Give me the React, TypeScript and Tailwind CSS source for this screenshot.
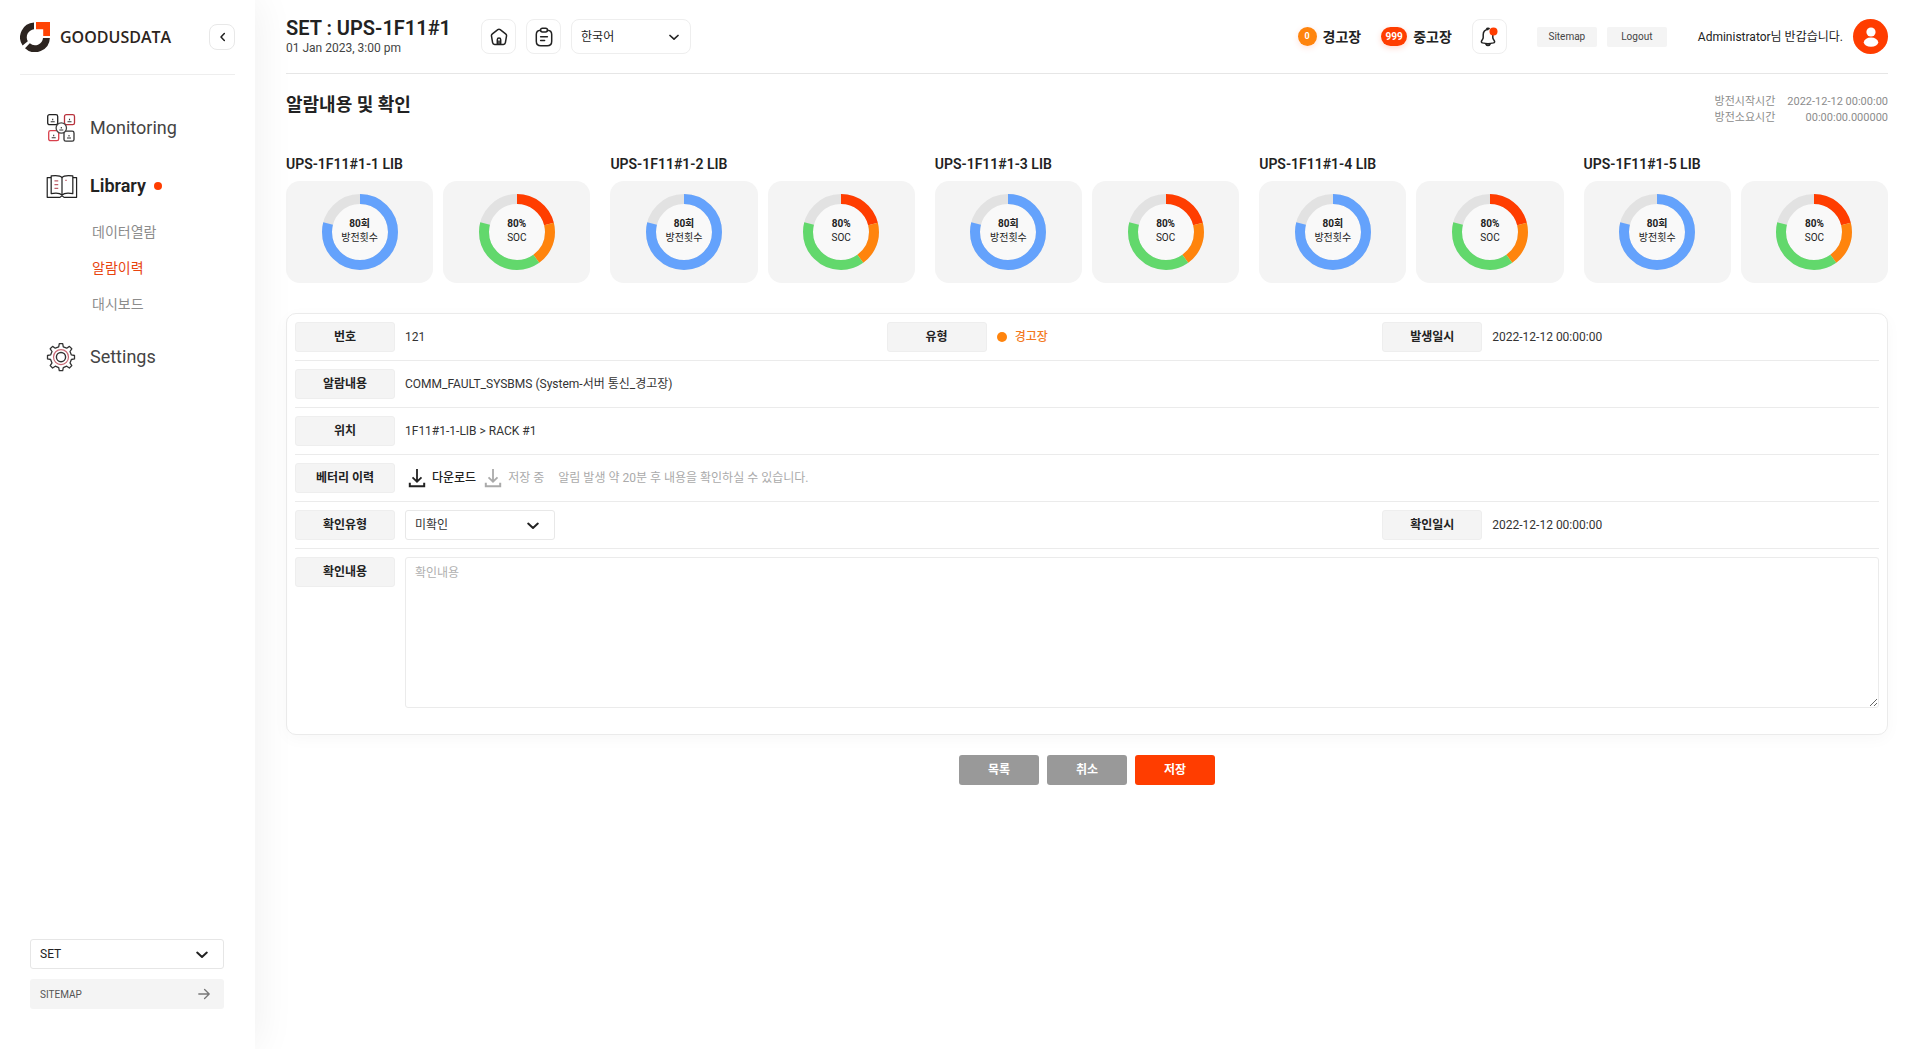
import React, { useState } from "react";
import type { ReactNode } from "react";

const FONT = "font-['Roboto','Noto_Sans_CJK_KR',sans-serif]";

function Chevron({ className }: { className: string }) {
  return (
    <svg viewBox="0 0 12 8" fill="none" stroke="#222" strokeWidth="2" strokeLinecap="round" strokeLinejoin="round" className={className} aria-hidden="true">
      <path d="M1.2 1.6 6 6l4.800-4.400" />
    </svg>
  );
}

function Logo() {
  return (
    <svg viewBox="0 0 30 30" className="size-[30px]" aria-hidden="true">
      <path d="M14 0.600A14.700 14.700 0 0 0 2.600 23.500L7.800 19.200A8 8 0 0 1 14 7.300Z" fill="#2c2420" />
      <path d="M29.900 16A14.800 14.800 0 0 1 5 26.200L9.800 21.300A8 8 0 0 0 23 16Z" fill="#2c2420" />
      <path d="M16 0H30V14H23.200V7.300H16Z" fill="#ff4405" />
    </svg>
  );
}

function MonitoringIcon() {
  const cell = (x: number, y: number) => (
    <path d={`M${x - 2} ${y + 2}h4M${x} ${y - 1}v1.600`} stroke="#333" strokeWidth="1.100" />
  );
  return (
    <svg viewBox="0 0 30 30" fill="none" strokeWidth="1.300" className="size-[30px]" aria-hidden="true">
      <rect x="1.700" y="1.700" width="10" height="10" rx="1.800" stroke="#222" />
      <rect x="18.500" y="1.700" width="10" height="10" rx="1.800" stroke="#b8323c" />
      <rect x="2.700" y="17.700" width="10" height="10" rx="1.800" stroke="#d8404c" />
      <rect x="18" y="18.200" width="10" height="10" rx="1.800" stroke="#333" />
      <circle cx="15.300" cy="15" r="5.200" stroke="#444" fill="#fff" />
      {cell(6.700, 6.700)}
      {cell(23.500, 6.700)}
      {cell(7.700, 22.700)}
      {cell(23, 23)}
      {cell(15.300, 15)}
    </svg>
  );
}

function BookIcon() {
  return (
    <svg viewBox="0 0 34 26" fill="none" stroke="#222" strokeWidth="1.300" strokeLinejoin="round" className="h-[25px] w-8" aria-hidden="true">
      <path d="M5.500 3.500H1.300V24.500H14.500C15.500 24.500 16 23 17 23s1.500 1.500 2.500 1.500H32.500V3.500H28.500" />
      <path d="M17 3.500C15 1 11 1.200 5.500 1.800V20.500C11 19.500 15 20 17 22C19 20 23 19.500 28.500 20.500V1.800C23 1.200 19 1 17 3.500Z" />
      <path d="M17 3.500V22" />
      <path d="M9 7h4M9 11h4M9 15h4M20.500 6.500h1.500" stroke="#c0606a" />
    </svg>
  );
}

function GearIcon() {
  return (
    <svg viewBox="0 0 30 30" fill="none" strokeLinejoin="round" className="size-[30px]" aria-hidden="true">
      <path
        d="M12.700 4.800 13.300 1.700h3.400l.6 3.100 3.400 1.400 2.700-1.800 2.400 2.400-1.800 2.700 1.400 3.400 3.100.6v3.400l-3.100.6-1.400 3.400 1.800 2.700-2.400 2.400-2.700-1.800-3.400 1.400-.6 3.100h-3.400l-.6-3.100-3.400-1.400-2.700 1.800-2.400-2.400 1.800-2.700-1.400-3.400-3.100-.6v-3.400l3.100-.6 1.400-3.400-1.800-2.700 2.400-2.400 2.700 1.800Z"
        stroke="#333"
        strokeWidth="1.300"
      />
      <circle cx="15" cy="15.100" r="7.500" stroke="#c86874" strokeWidth="1.200" />
      <circle cx="15" cy="15.100" r="4.600" stroke="#333" strokeWidth="1.400" />
    </svg>
  );
}

function HomeIcon() {
  return (
    <svg viewBox="0 0 18 18" fill="none" stroke="#222" strokeWidth="1.500" strokeLinejoin="round" className="size-[18px]" aria-hidden="true">
      <path d="M7.800 1.600 2.400 5.800C1.600 6.400 1.300 7.100 1.500 8.100l1.100 6.600c.2 1.100.9 1.700 2 1.700h8.800c1.100 0 1.800-.6 2-1.700l1.100-6.600c.2-1-.1-1.700-.9-2.300L10.200 1.600c-.8-.6-1.600-.6-2.400 0Z" />
      <path d="M7.300 16v-4.300a1.700 1.700 0 0 1 3.400 0V16M9 12.500V16" />
    </svg>
  );
}

function ClipboardIcon() {
  return (
    <svg viewBox="0 0 18 20" fill="none" stroke="#222" strokeWidth="1.500" strokeLinecap="round" strokeLinejoin="round" className="h-5 w-[18px]" aria-hidden="true">
      <path d="M5.500 3.200C2.500 3.300 1.300 4.600 1.300 7.500v6.800c0 3 1.500 4.500 4.500 4.500h6.400c3 0 4.500-1.500 4.500-4.500V7.500c0-2.900-1.200-4.200-4.200-4.300" />
      <rect x="5.500" y="1.200" width="7" height="3.800" rx="1.900" />
      <path d="M5.600 9.800h6.800M5.600 13.400h4" />
    </svg>
  );
}

function BellIcon() {
  return (
    <svg viewBox="0 0 20 20" fill="none" className="size-5" aria-hidden="true">
      <path d="M9 2.500C5.900 2.500 4.200 4.900 4.200 7.700v2.700c0 .8-.3 1.400-.8 2.200l-.8 1.300c-.5.9-.1 1.700.9 2 3.700 1 7.300 1 11 0 1-.3 1.400-1.100.9-2l-.8-1.300c-.5-.8-.8-1.400-.8-2.200V7.700" stroke="#222" strokeWidth="1.500" strokeLinecap="round" />
      <path d="M7 17c.9 1.800 3.100 1.800 4 0" stroke="#222" strokeWidth="1.800" strokeLinecap="round" />
      <path d="M7.500 2.300C8 1 10 1 10.500 2.300" stroke="#222" strokeWidth="1.500" />
      <circle cx="14.500" cy="4.500" r="4" fill="#ff3d00" />
    </svg>
  );
}

function DownloadIcon() {
  return (
    <svg viewBox="0 0 18 20" fill="none" stroke="currentColor" strokeWidth="2" className="h-5 w-[18px] shrink-0" aria-hidden="true">
      <path d="M9 1v12.500M4.500 9.300 9 13.700l4.500-4.400" strokeWidth="1.800" />
      <path d="M1.800 14.800V18.300H16.200V14.800" />
    </svg>
  );
}

type Slice = { color: string; from: number; to: number };

function Donut({ slices, value, label }: { slices: Slice[]; value: string; label: string }) {
  const r = 33;
  const c = 2 * Math.PI * r;
  return (
    <div className="grid h-[102px] flex-1 place-items-center rounded-[14px] bg-[#f4f4f4]">
      <div className="grid place-items-center">
        <svg viewBox="0 0 76 76" className="col-start-1 row-start-1 size-[76px] -rotate-90" aria-hidden="true">
          <circle cx="38" cy="38" r={r} fill="#f9f9f9" stroke="#e2e2e2" strokeWidth="10" />
          {slices.map((s) => (
            <circle
              key={s.color}
              cx="38"
              cy="38"
              r={r}
              fill="none"
              stroke={s.color}
              strokeWidth="10"
              strokeDasharray={`${(s.to - s.from) * c} ${c}`}
              strokeDashoffset={-s.from * c}
            />
          ))}
        </svg>
        <div className="z-10 col-start-1 row-start-1 pb-0.5 text-center text-[10px] leading-[14px]">
          <p className="font-bold">{value}</p>
          <p>{label}</p>
        </div>
      </div>
    </div>
  );
}

const dischargeSlices: Slice[] = [{ color: "#64a2fc", from: 0, to: 0.79 }];
const socSlices: Slice[] = [
  { color: "#ff3d00", from: 0, to: 0.21 },
  { color: "#ff840d", from: 0.21, to: 0.4 },
  { color: "#62d86c", from: 0.4, to: 0.79 },
];

const labelClass =
  "grid h-[30px] w-[100px] shrink-0 place-items-center rounded-[3px] border border-[#eeeeee] bg-[#f4f4f4] text-xs font-bold text-[#222]";

function Field({ label, htmlFor, children }: { label: string; htmlFor?: string; children: ReactNode }) {
  return (
    <div className="flex items-start gap-2.5">
      {htmlFor ? (
        <label htmlFor={htmlFor} className={labelClass}>
          {label}
        </label>
      ) : (
        <span className={labelClass}>{label}</span>
      )}
      <div className="flex min-h-[30px] flex-1 items-center">{children}</div>
    </div>
  );
}

function Row({ children }: { children: ReactNode }) {
  return <div className="grid grid-cols-[592fr_496fr_497fr] border-b border-[#ebebeb] py-2">{children}</div>;
}

function Sidebar() {
  return (
    <aside className="z-10 flex w-[255px] shrink-0 flex-col bg-white shadow-[0_0_40px_rgba(0,0,0,0.07)]">
      <div className="mx-5 flex h-[75px] items-center justify-between border-b border-[#eeeeee]">
        <a href="#home" className="flex items-center gap-2.5">
          <Logo />
          <span className="font-['Open_Sans',sans-serif] text-base font-semibold leading-6 text-[#2c2420]">GOODUSDATA</span>
        </a>
        <button type="button" aria-label="메뉴 접기" className="grid size-[26px] place-items-center rounded-lg border border-[#e8e8e8]">
          <Chevron className="h-[6px] w-[9px] rotate-90" />
        </button>
      </div>
      <nav className="flex flex-col pl-[46px] pt-[38px] text-lg leading-[30px] text-[#444]">
        <a href="#monitoring" className="flex h-[30px] items-center">
          <span className="w-11"><MonitoringIcon /></span>
          Monitoring
        </a>
        <a href="#library" className="mt-7 flex h-[30px] items-center font-semibold text-[#222]">
          <span className="w-11"><BookIcon /></span>
          Library
          <span className="ml-2 size-2 rounded-full bg-[#ff3d00]" />
        </a>
        <div className="flex flex-col gap-4 pb-7 pl-[46px] pt-[21px] text-sm leading-5 text-[#8c8c8c]">
          <a href="#data">데이터열람</a>
          <a href="#alarm" aria-current="page" className="text-[#e8440f]">알람이력</a>
          <a href="#dashboard">대시보드</a>
        </div>
        <a href="#settings" className="flex h-[30px] items-center">
          <span className="w-11"><GearIcon /></span>
          Settings
        </a>
      </nav>
      <div className="mt-auto flex flex-col gap-2.5 pb-10 pl-[30px] pr-[31px]">
        <div className="relative">
          <select aria-label="SET" className="h-[30px] w-full appearance-none rounded-[3px] border border-[#e6e6e6] bg-white px-[9px] text-xs text-[#222]">
            <option>SET</option>
          </select>
          <Chevron className="pointer-events-none absolute right-4 top-3 h-2 w-3" />
        </div>
        <a href="#sitemap" className="flex h-[30px] items-center justify-between rounded-[3px] bg-[#f4f4f4] pl-2.5 pr-3.5 text-[10px] text-[#555]">
          SITEMAP
          <svg viewBox="0 0 12 12" fill="none" stroke="#777" strokeWidth="1.300" strokeLinecap="round" strokeLinejoin="round" className="size-3" aria-hidden="true">
            <path d="M.8 6h10.400M6.600 1.500 11.200 6l-4.600 4.500" />
          </svg>
        </a>
      </div>
    </aside>
  );
}

const headerButton = "grid size-[35px] place-items-center rounded-lg border border-[#eeeeee] bg-white";
const headerPill = "grid h-5 w-[60px] place-items-center rounded-[2px] bg-[#f4f4f4] text-[10px] text-[#444]";

function Header() {
  return (
    <header className="flex h-[74px] items-center border-b border-[#e6e6e6]">
      <div className="mr-[30px]">
        <h1 className="text-xl font-semibold leading-[22px]">SET : UPS-1F11#1</h1>
        <p className="text-xs leading-[18px] text-[#444]">01 Jan 2023, 3:00 pm</p>
      </div>
      <div className="flex items-center gap-2.5">
        <button type="button" aria-label="홈" className={headerButton}><HomeIcon /></button>
        <button type="button" aria-label="기록" className={headerButton}><ClipboardIcon /></button>
        <div className="relative">
          <select aria-label="언어" className="h-[35px] w-[120px] appearance-none rounded-lg border border-[#eeeeee] bg-white px-[9px] text-xs">
            <option>한국어</option>
          </select>
          <Chevron className="pointer-events-none absolute right-3 top-[15px] h-[7px] w-[10px]" />
        </div>
      </div>
      <div className="ml-auto flex items-center">
        <span className="grid size-[19px] place-items-center rounded-full bg-[#ff840d] text-[9px] font-bold text-white shadow-[0_2px_6px_rgba(255,61,0,0.15)]">0</span>
        <span className="ml-1.5 text-sm font-semibold">경고장</span>
        <span className="ml-5 grid h-[19px] w-[26px] place-items-center rounded-full bg-[#ff3d00] text-[10px] font-bold text-white shadow-[0_2px_6px_rgba(255,61,0,0.2)]">999</span>
        <span className="ml-1.5 text-sm font-semibold">중고장</span>
        <button type="button" aria-label="알림" className={headerButton + " ml-5"}><BellIcon /></button>
        <a href="#sitemap" className={headerPill + " ml-[30px]"}>Sitemap</a>
        <button type="button" className={headerPill + " ml-2.5"}>Logout</button>
        <span className="ml-[31px] text-xs">Administrator님 반갑습니다.</span>
        <button type="button" aria-label="프로필" className="ml-2.5 grid size-[35px] place-items-center rounded-full bg-[#ff3d00]">
          <svg viewBox="0 0 16 20" fill="#fff" className="h-5 w-4" aria-hidden="true">
            <circle cx="8" cy="5" r="4.600" />
            <ellipse cx="8" cy="15.200" rx="7.200" ry="4.600" />
          </svg>
        </button>
      </div>
    </header>
  );
}

function DetailPanel() {
  const [note, setNote] = useState("");
  return (
    <section className="mt-[30px] rounded-[10px] border border-[#ebebeb] bg-white px-2 pb-[18px] shadow-[0_4px_16px_rgba(0,0,0,0.03)]">
      <div className="text-xs leading-[18px] text-[#333]">
        <Row>
          <Field label="번호">121</Field>
          <Field label="유형">
            <span className="flex items-center gap-2 font-medium text-[#f37a1f]">
              <span className="size-2.5 rounded-full bg-[#ff840d]" />
              경고장
            </span>
          </Field>
          <Field label="발생일시">2022-12-12 00:00:00</Field>
        </Row>
        <Row>
          <Field label="알람내용">COMM_FAULT_SYSBMS (System-서버 통신_경고장)</Field>
        </Row>
        <Row>
          <Field label="위치">1F11#1-1-LIB &gt; RACK #1</Field>
        </Row>
        <Row>
          <Field label="베터리 이력">
            <button type="button" className="flex items-center gap-1.5 pl-[3px] font-medium text-[#222]">
              <DownloadIcon />
              다운로드
            </button>
            <button type="button" disabled className="ml-2 flex items-center gap-1.5 text-[#aaa]">
              <DownloadIcon />
              저장 중
            </button>
            <span className="ml-3.5 text-[#aaa]">알림 발생 약 20분 후 내용을 확인하실 수 있습니다.</span>
          </Field>
        </Row>
        <Row>
          <Field label="확인유형" htmlFor="confirm-type">
            <div className="relative">
              <select id="confirm-type" className="h-[30px] w-[150px] appearance-none rounded-[3px] border border-[#e8e8e8] bg-white px-[9px] text-xs">
                <option>미확인</option>
              </select>
              <Chevron className="pointer-events-none absolute right-4 top-3 h-2 w-3" />
            </div>
          </Field>
          <div className="col-start-3">
            <Field label="확인일시">2022-12-12 00:00:00</Field>
          </div>
        </Row>
        <div className="py-2">
          <Field label="확인내용" htmlFor="confirm-note">
            <textarea
              id="confirm-note"
              value={note}
              onChange={(e) => setNote(e.target.value)}
              placeholder="확인내용"
              className="block h-[151px] w-full rounded-[3px] border border-[#ebebeb] px-[9px] py-1.5 text-xs leading-[18px] placeholder:text-[#b0b0b0]"
            />
          </Field>
        </div>
      </div>
    </section>
  );
}

const actionButton = "grid h-[30px] w-20 place-items-center rounded-[3px] text-xs font-bold text-white";

export default function App() {
  return (
    <div className={"flex min-h-screen bg-white text-[#222] " + FONT}>
      <Sidebar />
      <main className="min-w-0 flex-1 pl-[31px] pr-8">
        <Header />
        <div className="flex items-start justify-between pt-[18px]">
          <h2 className="text-lg font-semibold leading-[26px]">알람내용 및 확인</h2>
          <dl className="grid grid-cols-[auto_auto] gap-x-3 pt-0.5 text-[11px] leading-4 text-[#8c8c8c]">
            <dt>방전시작시간</dt>
            <dd className="text-right">2022-12-12 00:00:00</dd>
            <dt>방전소요시간</dt>
            <dd className="text-right">00:00:00.000000</dd>
          </dl>
        </div>
        <div className="mt-7 grid grid-cols-5 gap-5">
          {[1, 2, 3, 4, 5].map((n) => (
            <section key={n}>
              <h3 className="text-sm font-semibold leading-5">UPS-1F11#1-{n} LIB</h3>
              <div className="mt-[7px] flex gap-2.5">
                <Donut slices={dischargeSlices} value="80회" label="방전횟수" />
                <Donut slices={socSlices} value="80%" label="SOC" />
              </div>
            </section>
          ))}
        </div>
        <DetailPanel />
        <div className="flex justify-center gap-2 py-5">
          <button type="button" className={actionButton + " bg-[#999]"}>목록</button>
          <button type="button" className={actionButton + " bg-[#999]"}>취소</button>
          <button type="button" className={actionButton + " bg-[#ff3d00]"}>저장</button>
        </div>
      </main>
    </div>
  );
}
